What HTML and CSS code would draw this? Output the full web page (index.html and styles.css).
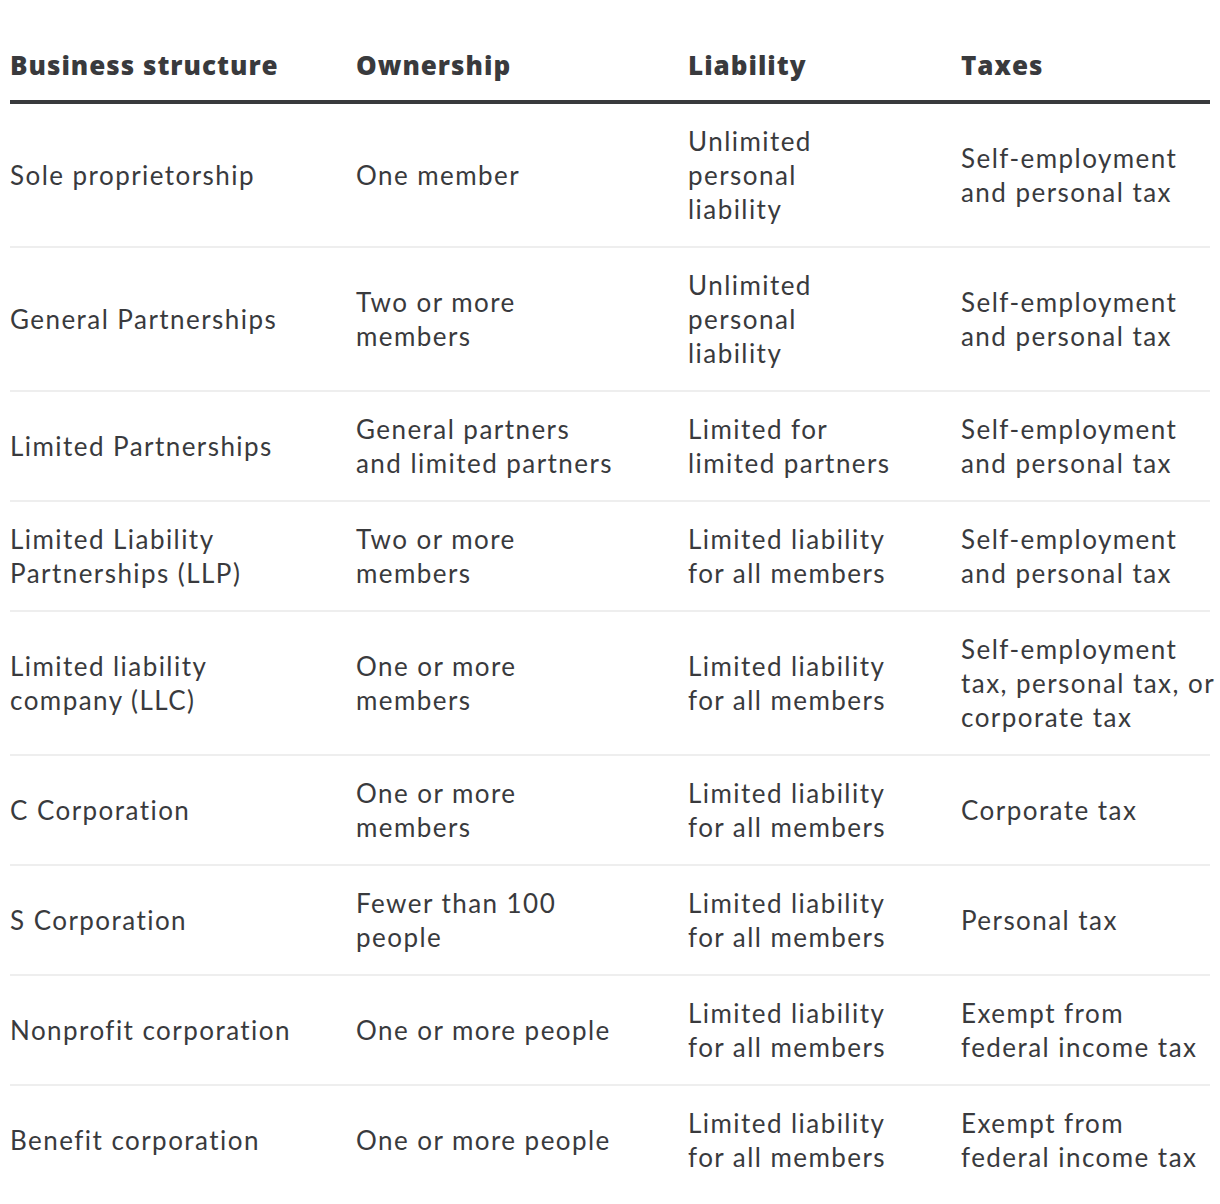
FILE: index.html
```html
<!DOCTYPE html>
<html lang="en">
<head>
<meta charset="utf-8">
<title>Business structures</title>
<link rel="stylesheet" href="styles.css">
</head>
<body>
<table class="compare">
  <thead>
    <tr>
      <th class="c1">Business structure</th>
      <th class="c2">Ownership</th>
      <th class="c3">Liability</th>
      <th class="c4">Taxes</th>
    </tr>
  </thead>
  <tbody>
    <tr>
      <td>Sole proprietorship</td>
      <td>One member</td>
      <td>Unlimited<br>personal<br>liability</td>
      <td>Self-employment<br>and personal tax</td>
    </tr>
    <tr>
      <td>General Partnerships</td>
      <td>Two or more<br>members</td>
      <td>Unlimited<br>personal<br>liability</td>
      <td>Self-employment<br>and personal tax</td>
    </tr>
    <tr>
      <td>Limited Partnerships</td>
      <td>General partners<br>and limited partners</td>
      <td>Limited for<br>limited partners</td>
      <td>Self-employment<br>and personal tax</td>
    </tr>
    <tr>
      <td>Limited Liability<br>Partnerships (LLP)</td>
      <td>Two or more<br>members</td>
      <td>Limited liability<br>for all members</td>
      <td>Self-employment<br>and personal tax</td>
    </tr>
    <tr>
      <td>Limited liability<br>company (LLC)</td>
      <td>One or more<br>members</td>
      <td>Limited liability<br>for all members</td>
      <td>Self-employment<br>tax, personal tax, or<br>corporate tax</td>
    </tr>
    <tr>
      <td>C Corporation</td>
      <td>One or more<br>members</td>
      <td>Limited liability<br>for all members</td>
      <td>Corporate tax</td>
    </tr>
    <tr>
      <td>S Corporation</td>
      <td>Fewer than 100<br>people</td>
      <td>Limited liability<br>for all members</td>
      <td>Personal tax</td>
    </tr>
    <tr>
      <td>Nonprofit corporation</td>
      <td>One or more people</td>
      <td>Limited liability<br>for all members</td>
      <td>Exempt from<br>federal income tax</td>
    </tr>
    <tr>
      <td>Benefit corporation</td>
      <td>One or more people</td>
      <td>Limited liability<br>for all members</td>
      <td>Exempt from<br>federal income tax</td>
    </tr>
  </tbody>
</table>
</body>
</html>
```
FILE: styles.css
```css
html, body {
  margin: 0;
  padding: 0;
  background: #ffffff;
}

.compare {
  margin: 28px 10px 0 10px;
  width: 1200px;
  border-collapse: collapse;
  table-layout: fixed;
  color: #393a3d;
}

.compare th,
.compare td {
  padding: 20px 0;
  text-align: left;
  white-space: nowrap;
  line-height: 34px;
}

.compare th {
  padding-bottom: 18px;
  font-family: "Open Sans", "Noto Sans", sans-serif;
  font-weight: 800;
  font-size: 26px;
  letter-spacing: 1px;
  vertical-align: middle;
  border-bottom: 4px solid #393a3d;
}

.compare td {
  font-family: Lato, "Noto Sans", sans-serif;
  font-weight: 400;
  font-size: 26px;
  letter-spacing: 1.45px;
  vertical-align: middle;
  border-bottom: 2px solid #eeeeee;
}

.compare tbody tr:last-child td {
  border-bottom: none;
}

.c1 { width: 346px; }
.c2 { width: 332px; }
.c3 { width: 273px; }
.c4 { width: 249px; }
```
